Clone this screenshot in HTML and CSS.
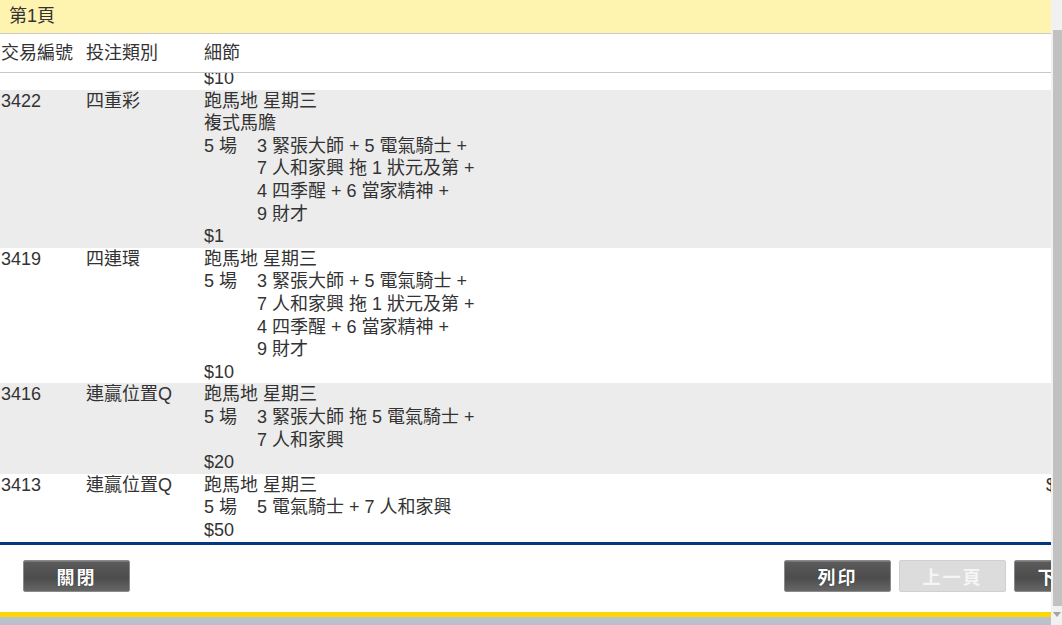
FILE: index.html
```html
<!DOCTYPE html>
<html lang="zh-Hant">
<head>
    <meta charset="UTF-8">
    <title>交易紀錄</title>
    <link rel="stylesheet" href="styles.css">
</head>
<body>
    <div class="page">
        <div class="main">
            <div class="sheet">
                <!-- Page title -->
                <div class="page-title">第1頁</div>

                <!-- Column headings -->
                <div class="record-row head">
                    <div class="cell">交易編號</div>
                    <div class="cell">投注類別</div>
                    <div class="cell">細節</div>
                    <div class="cell"></div>
                </div>

                <!-- Records -->
                <div class="records">
                    <div class="record-row partial">
                        <div class="cell"></div>
                        <div class="cell"></div>
                        <div class="cell">$10</div>
                        <div class="cell"></div>
                    </div>

                    <div class="record-row alt">
                        <div class="cell">3422</div>
                        <div class="cell">四重彩</div>
                        <div class="cell">
                            <div>跑馬地 星期三</div>
                            <div>複式馬膽</div>
                            <div class="leg">
                                <div class="race">5 場</div>
                                <div class="sel">
                                    <div>3 緊張大師 + 5 電氣騎士 +</div>
                                    <div>7 人和家興 拖 1 狀元及第 +</div>
                                    <div>4 四季醒 + 6 當家精神 +</div>
                                    <div>9 財才</div>
                                </div>
                            </div>
                            <div>$1</div>
                        </div>
                        <div class="cell"></div>
                    </div>

                    <div class="record-row">
                        <div class="cell">3419</div>
                        <div class="cell">四連環</div>
                        <div class="cell">
                            <div>跑馬地 星期三</div>
                            <div class="leg">
                                <div class="race">5 場</div>
                                <div class="sel">
                                    <div>3 緊張大師 + 5 電氣騎士 +</div>
                                    <div>7 人和家興 拖 1 狀元及第 +</div>
                                    <div>4 四季醒 + 6 當家精神 +</div>
                                    <div>9 財才</div>
                                </div>
                            </div>
                            <div>$10</div>
                        </div>
                        <div class="cell"></div>
                    </div>

                    <div class="record-row alt">
                        <div class="cell">3416</div>
                        <div class="cell">連贏位置Q</div>
                        <div class="cell">
                            <div>跑馬地 星期三</div>
                            <div class="leg">
                                <div class="race">5 場</div>
                                <div class="sel">
                                    <div>3 緊張大師 拖 5 電氣騎士 +</div>
                                    <div>7 人和家興</div>
                                </div>
                            </div>
                            <div>$20</div>
                        </div>
                        <div class="cell"></div>
                    </div>

                    <div class="record-row">
                        <div class="cell">3413</div>
                        <div class="cell">連贏位置Q</div>
                        <div class="cell">
                            <div>跑馬地 星期三</div>
                            <div class="leg">
                                <div class="race">5 場</div>
                                <div class="sel">
                                    <div>5 電氣騎士 + 7 人和家興</div>
                                </div>
                            </div>
                            <div>$50</div>
                        </div>
                        <div class="cell">$50</div>
                    </div>
                </div>

                <!-- Buttons -->
                <div class="footer">
                    <button class="btn">關閉</button>
                    <div class="btn-group">
                        <button class="btn">列印</button>
                        <button class="btn disabled">上一頁</button>
                        <button class="btn">下一頁</button>
                    </div>
                </div>
                <div class="bar-yellow"></div>
                <div class="bar-grey"></div>
            </div>
        </div>

        <!-- Window scrollbar -->
        <div class="scrollbar">
            <div class="thumb"></div>
            <div class="arrow"></div>
        </div>
    </div>
</body>
</html>
```

FILE: styles.css
```css
* {
    box-sizing: border-box;
}

body, html {
    margin: 0;
    padding: 0;
    background: #fff;
}

body {
    font-family: "Liberation Sans", "Noto Sans CJK TC", sans-serif;
    font-size: 18px;
    color: #333;
}

.page {
    display: flex;
    height: 625px;
    overflow: hidden;
}

.main {
    flex: 1;
    overflow: hidden;
}

.sheet {
    width: 1144px;
    height: 100%;
    display: flex;
    flex-direction: column;
}

.page-title {
    height: 34px;
    line-height: 33px;
    padding-left: 9px;
    background-color: #fff3b0;
    border-bottom: 1px solid #c8c8c8;
}

.record-row {
    display: grid;
    grid-template-columns: 85px 118px 842px 99px;
    line-height: 22.6px;
    background: #fff;
}

.record-row .cell {
    padding-left: 1px;
}

.record-row.head {
    height: 39px;
    align-items: center;
    border-bottom: 1px solid #c8c8c8;
}

.record-row.alt {
    background-color: #ececec;
}

.records {
    flex: 1;
    overflow: hidden;
    border-bottom: 3px solid #003a7d;
}

.partial {
    margin-top: -6px;
}

.leg {
    display: flex;
}

.race {
    width: 53px;
}

.footer {
    display: flex;
    justify-content: space-between;
    padding: 15px 23px 20px 23px;
    background: #fff;
}

.btn-group {
    display: flex;
    gap: 8px;
}

.btn {
    width: 107px;
    height: 32px;
    padding: 0;
    border: 1px solid #8a8a8a;
    border-radius: 2px;
    background: linear-gradient(#5c5c5c, #4c4c4c 55%, #666);
    color: #fff;
    font-family: "Liberation Sans", "Noto Sans CJK TC", sans-serif;
    font-size: 18px;
    font-weight: bold;
    letter-spacing: 2px;
    text-shadow: 0 0 1px #222;
    box-shadow: inset 0 1px 0 #777;
    cursor: pointer;
}

.btn.disabled {
    background: #dcdcdc;
    border-color: #d0d0d0;
    color: #f5f5f5;
    text-shadow: none;
    box-shadow: none;
    cursor: default;
}

.bar-yellow {
    height: 5px;
    background-color: #ffd700;
}

.bar-grey {
    height: 8px;
    background-color: #b9c1cd;
}

.scrollbar {
    width: 11px;
    background-color: #f1f1f1;
    display: flex;
    flex-direction: column;
    align-items: flex-end;
}

.thumb {
    width: 9px;
    height: 576px;
    margin-top: 30px;
    background-color: #c1c1c1;
}

.arrow {
    margin-top: 6px;
    margin-right: 1px;
    width: 0;
    height: 0;
    border-left: 4px solid transparent;
    border-right: 4px solid transparent;
    border-top: 5px solid #a3a3a3;
}
```
